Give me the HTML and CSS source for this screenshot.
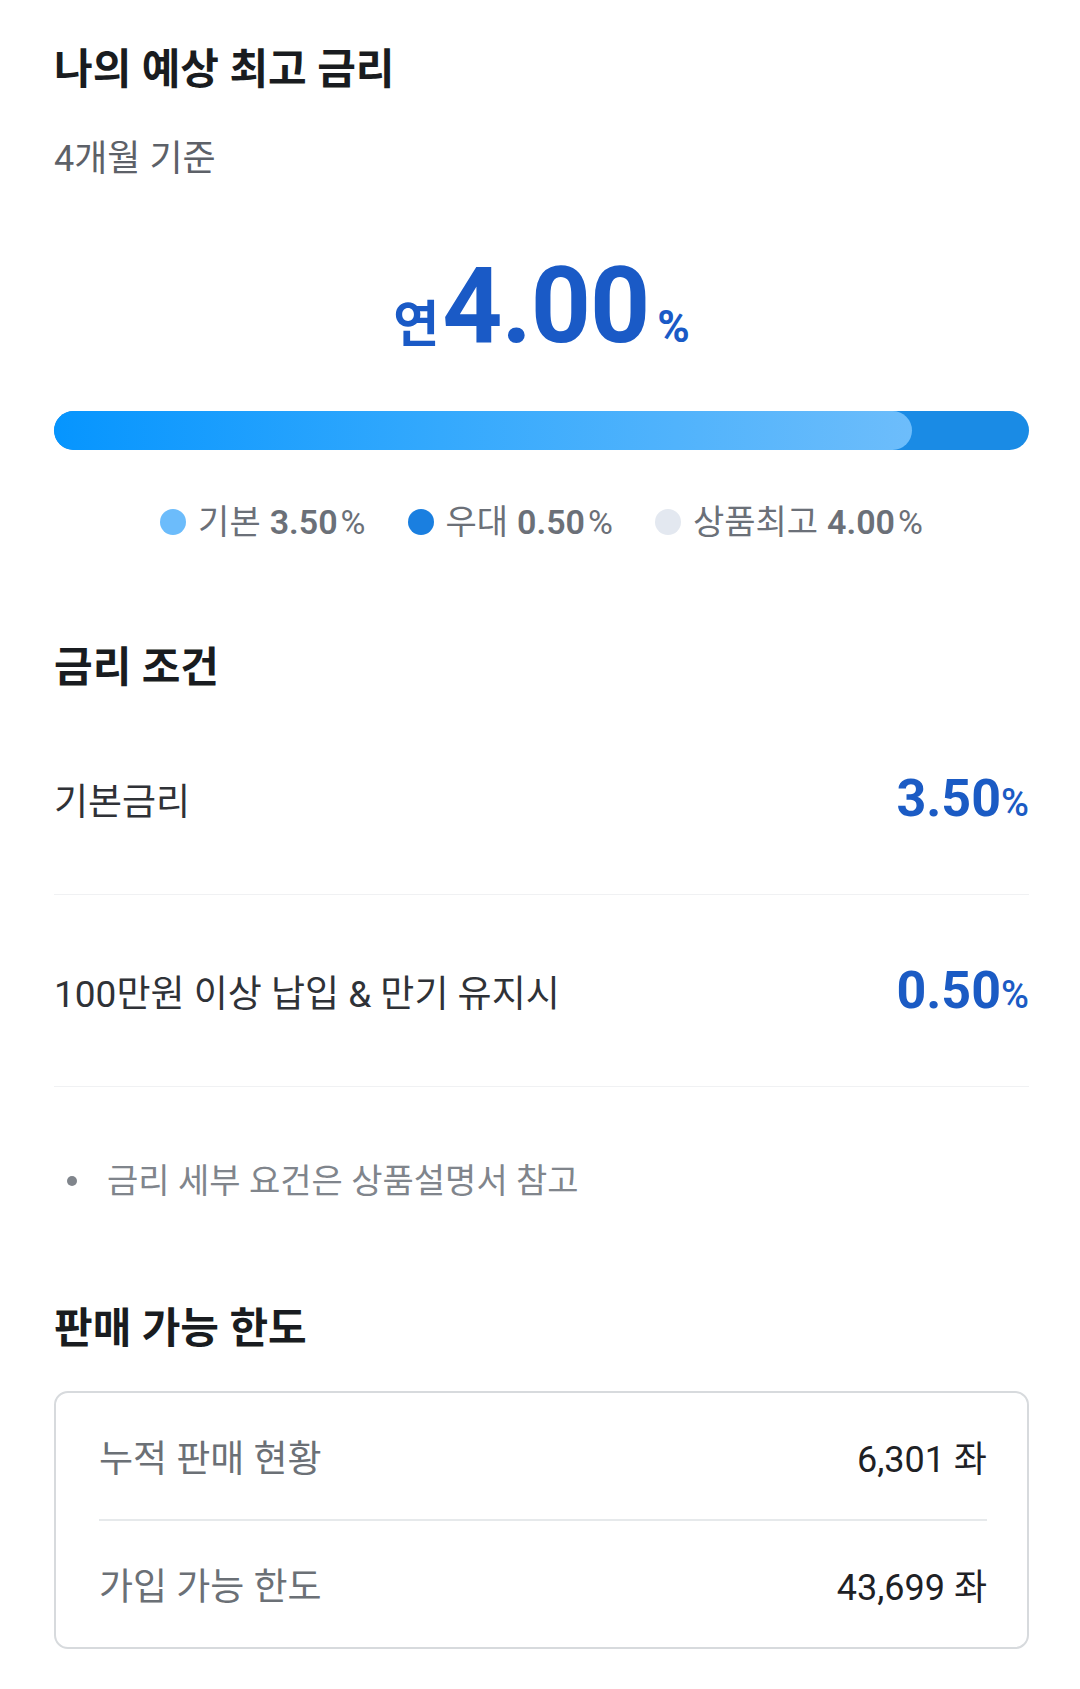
FILE: index.html
```html
<!DOCTYPE html>
<html lang="ko">
<head>
    <meta charset="UTF-8">
    <meta name="viewport" content="width=device-width, initial-scale=1.0">
    <title>나의 예상 최고 금리</title>
    <link rel="stylesheet" href="styles.css">
</head>
<body>

    <div class="page">
        <h2 class="section-title">나의 예상 최고 금리</h2>
        <p class="period">4개월 기준</p>

        <div class="rate">
            <span class="rate-prefix">연</span>
            <span class="rate-value">4.00</span>
            <span class="rate-unit">%</span>
        </div>

        <div class="rate-bar">
            <div class="rate-bar-fill" style="width: 88%;"></div>
        </div>

        <ul class="legend">
            <li><span class="dot dot-base"></span>기본 <b>3.50</b><i>%</i></li>
            <li><span class="dot dot-bonus"></span>우대 <b>0.50</b><i>%</i></li>
            <li><span class="dot dot-max"></span>상품최고 <b>4.00</b><i>%</i></li>
        </ul>

        <h2 class="section-title title-conditions">금리 조건</h2>
        <div class="condition-list">
            <div class="condition">
                <span class="condition-name">기본금리</span>
                <span class="condition-rate">3.50<small>%</small></span>
            </div>
            <div class="condition">
                <span class="condition-name">100만원 이상 납입 &amp; 만기 유지시</span>
                <span class="condition-rate">0.50<small>%</small></span>
            </div>
        </div>
        <ul class="notes">
            <li>금리 세부 요건은 상품설명서 참고</li>
        </ul>

        <h2 class="section-title title-limit">판매 가능 한도</h2>
        <div class="limit-box">
            <div class="limit-row">
                <span class="limit-label">누적 판매 현황</span>
                <span class="limit-value">6,301 좌</span>
            </div>
            <div class="limit-row">
                <span class="limit-label">가입 가능 한도</span>
                <span class="limit-value">43,699 좌</span>
            </div>
        </div>
    </div>

</body>
</html>
```

FILE: styles.css
```css
body {
    margin: 0;
    background-color: #fff;
    font-family: Roboto, "Noto Sans CJK KR", sans-serif;
    color: #1d2024;
}

.page {
    padding: 42px 51px 40px 54px;
}

.section-title {
    margin: 0;
    font-size: 42px;
    line-height: 56px;
    font-weight: 700;
    color: #191c20;
}

.period {
    margin: 37px 0 0;
    font-size: 36px;
    line-height: 48px;
    color: #5d6168;
}

/* 큰 금리 숫자 */
.rate {
    display: flex;
    justify-content: center;
    align-items: baseline;
    margin-top: 71px;
    height: 105px;
    color: #1a5ac6;
    font-weight: 700;
    line-height: 1;
}

.rate-prefix {
    font-size: 50px;
    margin-right: 3px;
}

.rate-value {
    font-size: 105px;
    letter-spacing: -1px;
}

.rate-unit {
    font-size: 44px;
    margin-left: 8px;
}

.rate-bar {
    margin-top: 52px;
    height: 39px;
    border-radius: 20px;
    background-color: #1a8be5;
    overflow: hidden;
}

.rate-bar-fill {
    height: 100%;
    border-radius: 20px;
    background: linear-gradient(to right, #0695fe, #34a9fd 45%, #6dbdfb);
}

.legend {
    list-style: none;
    margin: 50px 0 0;
    padding: 0;
    display: flex;
    justify-content: center;
    gap: 42px;
    font-size: 34px;
    line-height: 44px;
    color: #6b7078;
}

.legend li {
    display: flex;
    align-items: center;
}

.legend b {
    font-weight: 600;
    margin-left: 9px;
}

.legend i {
    font-style: normal;
    margin-left: 3px;
}

.dot {
    width: 26px;
    height: 26px;
    border-radius: 50%;
    margin-right: 12px;
}

.dot-base {
    background-color: #6cbcfb;
}

.dot-bonus {
    background-color: #1a7fe0;
}

.dot-max {
    background-color: #e3e8f0;
}

.title-conditions {
    margin-top: 96px;
}

.condition-list {
    margin-top: 7px;
}

.condition {
    display: flex;
    justify-content: space-between;
    align-items: center;
    height: 191px;
    border-bottom: 1px solid #f0f1f3;
}

.condition-name {
    font-size: 37px;
    color: #2f3237;
}

.condition-rate {
    font-size: 52px;
    font-weight: 700;
    color: #1b5bc4;
}

.condition-rate small {
    font-size: 38px;
    font-weight: 500;
}

.notes {
    list-style: none;
    margin: 70px 0 0;
    padding: 0 0 0 13px;
    font-size: 34px;
    line-height: 48px;
    color: #80858c;
}

.notes li {
    display: flex;
    align-items: center;
}

.notes li::before {
    content: "";
    width: 10px;
    height: 10px;
    border-radius: 50%;
    background-color: #80858c;
    margin-right: 30px;
}

.title-limit {
    margin-top: 96px;
}

.limit-box {
    margin-top: 34px;
    border: 2px solid #d7dadd;
    border-radius: 14px;
    padding: 0 40px 0 43px;
}

.limit-row {
    display: flex;
    justify-content: space-between;
    align-items: center;
    height: 126px;
}

.limit-row + .limit-row {
    border-top: 2px solid #e6e9eb;
}

.limit-label {
    font-size: 37px;
    color: #6b7076;
}

.limit-value {
    font-size: 36px;
    color: #1e2125;
}
```
